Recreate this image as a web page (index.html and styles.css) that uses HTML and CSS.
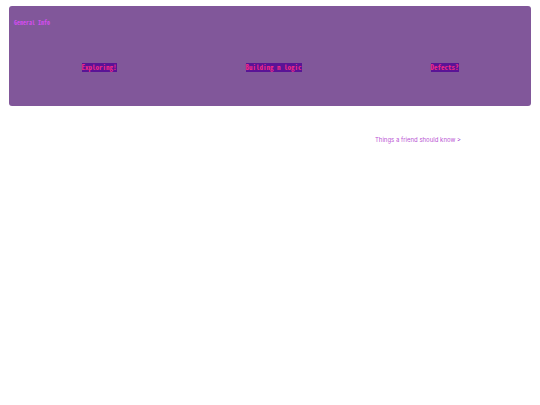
FILE: index.html
```html
<!DOCTYPE html>
<html lang="en">
<head>
<meta charset="utf-8">
<title>General Info</title>
<link rel="stylesheet" href="styles.css">
</head>
<body>
<main>
<section class="panel">
<h1 class="panel-title">General Info</h1>
<nav class="topics">
<a class="topic" href="#exploring">Exploring!</a>
<a class="topic" href="#logic">Building n logic</a>
<a class="topic" href="#defects">Defects?</a>
</nav>
</section>
<p class="more"><a class="more-link" href="#friend">Things a friend should know <span class="arrow">&gt;</span></a></p>
</main>
</body>
</html>
```
FILE: styles.css
```css
body {
  margin: 6px 9px;
  background: #fff;
}

.panel {
  padding: 13px 5px 34px;
  border-radius: 3px;
  background: #81579a;
  font-family: "Noto Sans Mono CJK JP", "Liberation Mono", monospace;
}

.panel-title {
  margin: 0;
  color: #d44cf0;
  font-size: 6px;
  font-weight: 700;
  line-height: 8px;
}

.topics {
  display: flex;
  justify-content: space-around;
  margin-top: 36px;
  padding: 0 3px;
}

.topic {
  background: #5a1496;
  color: #f02a86;
  font-size: 7px;
  font-weight: 700;
  line-height: 9px;
  text-decoration: none;
}

.more {
  margin: 29px 70px 0;
  text-align: right;
  font-family: Inter, "Noto Sans", sans-serif;
  font-size: 6px;
  line-height: 10px;
}

.more-link {
  color: #ba55d3;
  text-decoration: none;
}

.arrow {
  color: #9932cc;
}
```
